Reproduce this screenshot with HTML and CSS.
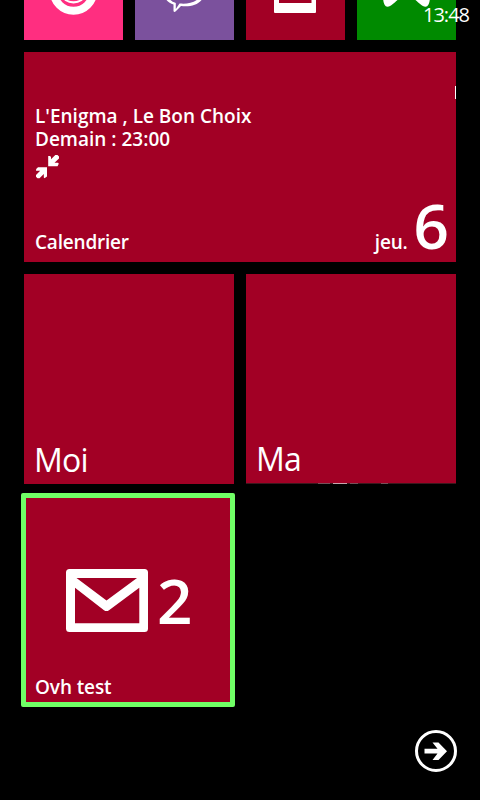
FILE: index.html
```
<!DOCTYPE html>
<html lang="fr">
<head>
<meta charset="utf-8">
<title>Accueil</title>
<link rel="stylesheet" href="styles.css">
</head>
<body>
<main class="screen">
  <time class="clock">13:48</time>
  <section class="row small-row">
    <div class="tile small pink">
      <svg width="99" height="40" viewBox="0 0 99 40"><circle cx="49.5" cy="-9" r="19.8" fill="none" stroke="#fff" stroke-width="8"/><ellipse cx="49.5" cy="-5" rx="11.5" ry="8.5" fill="#fff"/><path d="M43.500 0Q49.500 2.500 55.500 0Z" fill="#ff2e80"/></svg>
    </div>
    <div class="tile small purple">
      <svg width="99" height="40" viewBox="0 0 99 40"><path d="M30.200 -2C32 1.500 35 3.500 38.500 4.500V11Q39 12.500 40.500 11.500L46 6C55 7.200 64 5 68 -2H64C59 3.300 52 4 44.500 3.500L40.800 9V3C37 1.800 35 0 34 -2Z" fill="#fff"/></svg>
    </div>
    <div class="tile small red">
      <svg width="99" height="40" viewBox="0 0 99 40"><path d="M28 -2H33V3H65.500V-2H70V12Q70 13 69 13H29Q28 13 28 12Z" fill="#fff"/></svg>
    </div>
    <div class="tile small green">
      <svg width="99" height="40" viewBox="0 0 99 40"><path d="M26 -2C26.500 3 27.500 6.700 30.500 6.700C34.500 6.700 38 1.500 42 -1V-2ZM73 -2C72.500 3 71.500 6.700 68.500 6.700C64.500 6.700 61 1.500 57 -1V-2Z" fill="#fff"/></svg>
    </div>
  </section>
  <section class="tile calendar red">
    <div class="event">
      <p class="event-text">L'Enigma , Le Bon Choix<br>Demain : 23:00</p>
      <svg class="conflict" width="24" height="24" viewBox="0 0 24 24"><path d="M13.200 1H15L16 2V4.200L20.300 0H22.500L24 1.500V3.500L19.500 7.800H23L23.800 8.800L22.500 11.300H13.200ZM3 12.300H12V21.500L9.500 23.300L8.800 22.500V19L4.500 23.300H2.500L1 21.800V20L5.200 15.800H1L1.200 14Z" fill="#fff"/></svg>
    </div>
    <i class="sliver"></i>
    <div class="calendar-foot">
      <span class="name">Calendrier</span>
      <span class="weekday">jeu.</span>
      <span class="day">6</span>
    </div>
  </section>
  <section class="row medium-row">
    <div class="tile medium red"><span class="contact">Moi</span></div>
    <div class="tile medium red photo"><span class="contact ma">Ma</span>
      <svg class="edge" width="210" height="1" viewBox="0 0 210 1"><path d="M0 0H210V1H0Z" fill="#3c171d"/><path d="M72 0H84V1H72ZM104 0H112V1H104ZM135 0H142V1H135Z" fill="#76515a"/><path d="M87 0H101V1H87Z" fill="#c5a5ad"/></svg>
    </div>
  </section>
  <section class="tile mail red">
    <div class="mail-body">
      <svg width="82" height="63" viewBox="0 0 82 63"><path d="M3.500 0H78.500Q82 0 82 3.500V59.500Q82 63 78.500 63H3.500Q0 63 0 59.500V3.500Q0 0 3.500 0ZM10.500 9L40.500 31.500L71 9ZM9 18.800V54.200H73.300V18.800L43 41.200Q40.500 43 38 41.200Z" fill="#fff" fill-rule="evenodd"/></svg>
      <span class="count">2</span>
    </div>
    <span class="account">Ovh test</span>
  </section>
  <footer class="more">
    <svg width="44" height="44" viewBox="0 0 44 44"><circle cx="22" cy="22" r="19.500" fill="none" stroke="#fff" stroke-width="3"/><path d="M10.500 19.800H23.500L18.500 13.500H24.500L33 22.200L24.500 31H18.500L23.500 24.500H10.500Z" fill="#fff"/></svg>
  </footer>
</main>
</body>
</html>
```
FILE: styles.css
```
* { box-sizing: border-box; }
body { margin: 0; background: #000; color: #fff; font-family: "Open Sans", "Noto Sans", sans-serif; }
.screen { position: relative; width: 480px; height: 800px; padding: 0 24px; overflow: hidden; display: flex; flex-direction: column; background: #000; }
.clock { position: absolute; top: 3px; right: 12px; font-size: 20px; line-height: 23px; letter-spacing: -1px; margin-right: -1px; z-index: 2; }
.row { display: flex; gap: 12px; margin-bottom: 12px; }
.row svg, .mail svg, .more svg, .conflict { display: block; }
.tile { position: relative; white-space: nowrap; }
.small { width: 99px; height: 40px; }
.pink { background: #ff2e80; }
.purple { background: #7b519d; }
.red { background: #a20025; }
.green { background: #008a00; }
.calendar { height: 210px; margin-bottom: 12px; padding: 53px 7px 0 11px; display: flex; flex-direction: column; }
.event { flex: none; height: 100px; font-size: 19px; font-weight: 600; line-height: 23px; }
.event p { margin: 0; }
.conflict { margin-top: 4px; }
.sliver { position: absolute; right: 0; top: 34px; width: 1px; height: 13px; background: #fff; }
.calendar-foot { flex: none; display: flex; align-items: baseline; font-size: 19px; font-weight: 600; line-height: 40px; }
.name { letter-spacing: -0.2px; }
.weekday { margin-left: auto; margin-right: 6px; letter-spacing: -0.2px; }
.day { font-size: 62px; font-weight: 600; }
.medium { width: 210px; height: 210px; padding: 164px 10px 0; }
.contact { display: block; font-size: 32px; line-height: 44px; letter-spacing: -0.8px; }
.ma { margin-top: -1px; }
.edge { position: absolute; left: 0; bottom: 0; }
.medium-row { margin-bottom: 9px; }
.mail { width: 214px; height: 214px; margin-left: -3px; border: 5px solid #70ff66; border-radius: 2px; display: flex; flex-direction: column; }
.mail-body { display: flex; align-items: center; margin: 71px 0 0 40px; height: 63px; }
.count { font-size: 62px; font-weight: 600; line-height: 61px; margin: -1px 0 0 9px; }
.account { font-size: 19px; font-weight: 600; line-height: 26px; margin: 42px 0 0 9px; letter-spacing: -0.1px; }
.more { display: flex; justify-content: flex-end; margin: 22px -2px 0 0; }
```
